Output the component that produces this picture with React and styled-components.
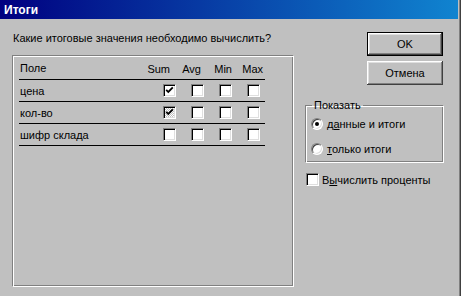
import styled, { createGlobalStyle } from 'styled-components';

const GlobalStyle = createGlobalStyle`
  html, body {
    margin: 0;
    padding: 0;
    background: #c0c0c0;
  }
  body {
    font-family: "Liberation Sans", Arial, sans-serif;
    font-size: 11px;
    color: #000;
  }
`

const Window = styled.div`
  width: 461px;
  height: 296px;
  box-sizing: border-box;
  padding-right: 3px;
  background: #c0c0c0;
  box-shadow: inset -1px 0 #404040, inset -2px 0 #808080;
  overflow: hidden;
`

const TitleBar = styled.div`
  height: 19px;
  display: flex;
  align-items: center;
  padding-left: 4px;
  background: linear-gradient(to right, #000080, #1084d0);
  color: #fff;
  font-weight: bold;
  font-size: 12px;
`

const Body = styled.div`
  display: flex;
  padding-left: 12px;
`

const LeftCol = styled.div`
  width: 282px;
  display: flex;
  flex-direction: column;
  padding-top: 13px;
`

const Prompt = styled.div`
  line-height: 13px;
  margin: 0 0 10px 1px;
`

// etched frame: grey outside top-left, white inside
const Panel = styled.div`
  width: 282px;
  height: 232px;
  box-sizing: border-box;
  border: 1px solid;
  border-color: #808080 #fff #fff #808080;
  box-shadow: inset 1px 1px #fff, inset -1px -1px #808080;
  padding: 2px 0 0 6px;
`

const Table = styled.div`
  width: 246px;
`

const HeadRow = styled.div`
  display: flex;
  align-items: center;
  height: 21px;
  border-bottom: 1px solid #000;
`

const NameCell = styled.div`
  flex: 1;
  padding-left: 1px;
  margin-top: ${p => p.head ? '-2px' : '0'};
`

const HeadCell = styled.div`
  width: 31px;
  text-align: right;
  padding-right: 2px;
  box-sizing: border-box;
`

const Row = styled.div`
  display: flex;
  align-items: center;
  height: 21px;
  border-bottom: 1px solid #000;
`

const BoxCell = styled.div`
  width: 28px;
  display: flex;
  justify-content: flex-end;
  padding-right: 5px;
  box-sizing: border-box;
`

const Box = styled.div`
  width: 13px;
  height: 13px;
  box-sizing: border-box;
  border: 1px solid;
  border-color: #808080 #fff #fff #808080;
  box-shadow: inset 1px 1px #000, inset -1px -1px #dfdfdf;
  background: ${p => p.dither
    ? 'repeating-conic-gradient(#c0c0c0 0 25%, #fff 0 50%) 0 0 / 2px 2px'
    : '#fff'};
  display: flex;
  align-items: center;
  justify-content: center;
  flex-shrink: 0;
`

const RightCol = styled.div`
  width: 139px;
  margin-left: 11px;
  padding-top: 13px;
  display: flex;
  flex-direction: column;
`

const Button = styled.button`
  width: 76px;
  height: 24px;
  align-self: flex-end;
  margin: ${p => p.first ? '0 1px 0 0' : '5px 1px 0 0'};
  padding: 0;
  font: inherit;
  color: #000;
  background: #c0c0c0;
  border: ${p => p.primary ? '1px solid #000' : 'none'};
  box-shadow: inset -1px -1px #404040, inset 1px 1px #fff,
    inset -2px -2px #808080, inset 2px 2px #dfdfdf;
`

const Group = styled.fieldset`
  margin: 14px 0 0 0;
  height: 64px;
  box-sizing: border-box;
  padding: 5px 0 0 5px;
  border: 1px solid;
  border-color: #808080 #fff #fff #808080;
  box-shadow: inset 1px 1px #fff, inset -1px -1px #808080;
  display: flex;
  flex-direction: column;
  gap: 12px;
`

const Legend = styled.legend`
  padding: 0 2px;
  margin-left: 1px;
  line-height: 13px;
`

const Option = styled.label`
  display: flex;
  align-items: center;
  gap: 4px;
  height: 13px;
`

const Radio = styled.span`
  position: relative;
  width: 12px;
  height: 12px;
  box-sizing: border-box;
  border-radius: 50%;
  border: 1px solid;
  border-color: #808080 #fff #fff #808080;
  background: #fff;
  box-shadow: inset 1px 1px #404040, inset -1px -1px #dfdfdf;
  flex-shrink: 0;

  &::after {
    content: '';
    display: ${p => p.checked ? 'block' : 'none'};
    position: absolute;
    left: 3px;
    top: 3px;
    width: 4px;
    height: 4px;
    border-radius: 50%;
    background: #000;
  }
`

const CheckLine = styled.label`
  display: flex;
  align-items: center;
  gap: 3px;
  margin: 10px 0 0 1px;
`

const Hot = styled.u`
  text-decoration: underline;
`

const Tick = () => (
  <svg width="9" height="9" viewBox="0 0 9 9">
    <path d="M1.2 3.8 L3.3 6 L7.8 1.4" fill="none" stroke="#000" strokeWidth="1.8" />
  </svg>
)

const rows = [
  { name: 'цена', sum: 'on' },
  { name: 'кол-во', sum: 'dither' },
  { name: 'шифр склада', sum: 'off' },
]

const CheckBox = ({ state }) => (
  <Box dither={state === 'dither'}>
    {state !== 'off' && <Tick />}
  </Box>
)

const App = () => (
  <Window>
    <GlobalStyle />
    <TitleBar>Итоги</TitleBar>
    <Body>
      <LeftCol>
        <Prompt>Какие итоговые значения необходимо вычислить?</Prompt>
        <Panel>
          <Table>
            <HeadRow>
              <NameCell head>Поле</NameCell>
              <HeadCell>Sum</HeadCell>
              <HeadCell>Avg</HeadCell>
              <HeadCell>Min</HeadCell>
              <HeadCell>Max</HeadCell>
            </HeadRow>
            {rows.map(r => (
              <Row key={r.name}>
                <NameCell>{r.name}</NameCell>
                <BoxCell><CheckBox state={r.sum} /></BoxCell>
                <BoxCell><CheckBox state="off" /></BoxCell>
                <BoxCell><CheckBox state="off" /></BoxCell>
                <BoxCell><CheckBox state="off" /></BoxCell>
              </Row>
            ))}
          </Table>
        </Panel>
      </LeftCol>
      <RightCol>
        <Button primary first>OK</Button>
        <Button>Отмена</Button>
        <Group>
          <Legend>Показать</Legend>
          <Option><Radio checked /><span>д<Hot>а</Hot>нные и итоги</span></Option>
          <Option><Radio /><span><Hot>т</Hot>олько итоги</span></Option>
        </Group>
        <CheckLine>
          <CheckBox state="off" />
          <span>В<Hot>ы</Hot>числить проценты</span>
        </CheckLine>
      </RightCol>
    </Body>
  </Window>
)

export default App;
